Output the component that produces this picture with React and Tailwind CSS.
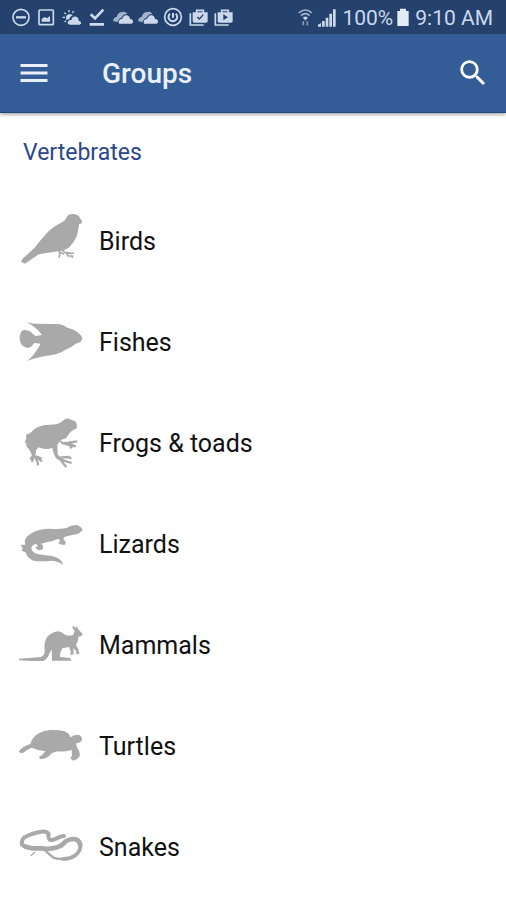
import React from "react";
import { MdMenu, MdSearch } from "react-icons/md";

const groups = [
  {
    name: "Birds",
    viewBox: "27 27 192 192",
    art: (
      <>
        <path d="M170 48 Q174 39 188 39 Q205 39 210 51 L217 63 Q216 68 207 70 Q205 88 201 104 Q193 124 176 140 Q160 151 144 151 L114 155 Q98 157 84 161 L45 188 L33 182 Q33 176 43 169 L75 139 Q91 118 110 97 Q130 76 156 64 Q167 59 170 48Z" />
        <path d="M145 148 L150 156 L147 170 M149 154 L162 159 M158 149 L166 155 L184 157 L192 156 M169 156 L174 165 L187 165 L187 171" fill="none" stroke="currentColor" strokeWidth="5" />
      </>
    ),
  },
  {
    name: "Fishes",
    viewBox: "27 15 192 192",
    art: (
      <path d="M33 41 Q48 49 70 53 L139 54 Q160 55 172 65 Q195 70 206 82 Q217 92 217 98 Q215 108 200 112 Q185 124 165 132 Q150 143 126 147 Q100 151 82 155 Q63 158 51 166 Q62 156 70 147 Q84 128 92 113 L73 111 Q67 122 56 126 Q47 126 40 121 Q29 112 29 97 Q29 80 38 73 Q51 70 63 78 Q69 86 77 90 L96 87 Q85 70 68 59 Q54 49 33 41Z" />
    ),
  },
  {
    name: "Frogs & toads",
    viewBox: "27 18 192 192",
    art: (
      <>
        <path d="M48 86 L60 82 Q76 63 100 58 L140 55 Q155 49 162 42 Q168 35 179 39 Q186 43 195 45 Q203 55 200 67 L184 76 Q174 85 169 96 L151 103 L160 108 L180 107 L186 116 L175 120 L155 114 L149 106 L142 116 L143 145 L153 157 L144 162 Q134 154 132 145 L127 126 Q105 133 85 124 L79 132 L75 151 L67 153 Q63 138 56 128 Q46 121 49 110 L43 109 Q51 99 48 86Z" />
        <path d="M176 110 L201 106 M178 113 L197 122 M178 114 L185 127 M148 155 L175 153 L184 157 M151 159 L168 166 L185 171 M149 158 L161 174 L169 183 M70 148 L61 160 M71 149 L66 168 M73 149 L83 169 L84 178 M75 150 L95 158 M78 152 L96 166" fill="none" stroke="currentColor" strokeWidth="7" />
      </>
    ),
  },
  {
    name: "Lizards",
    viewBox: "27 6 192 192",
    art: (
      <path d="M44 89 Q49 73 73 62 Q92 53 116 53 Q145 55 170 51 Q182 42 202 42 Q214 48 218 55 Q213 66 199 70 Q178 73 163 78 L160 85 L167 92 L166 101 L154 101 L144 96 L151 91 L145 83 Q128 91 110 94 L93 98 L100 105 L97 116 L84 117 L76 110 L84 105 L77 98 Q64 103 64 111 Q66 125 81 129 Q101 132 126 135 Q153 140 160 162 Q148 151 126 149 Q94 153 70 149 Q51 141 47 124 L35 119 L38 111 L31 101 L46 101Z" />
    ),
  },
  {
    name: "Mammals",
    viewBox: "27 3 192 192",
    art: (
      <path d="M27 137 L92 132 Q104 127 104 113 Q101 93 109 76 Q121 58 145 55 Q157 57 165 65 Q176 70 189 66 L194 54 L185 40 L194 41 L197 46 L199 38 L206 50 L218 63 L215 69 L205 71 Q205 84 198 97 L205 108 L208 123 L199 124 L198 113 L190 106 L191 124 L181 126 L182 115 L177 102 L157 106 Q149 119 150 132 L181 135 L184 143 L126 143 L125 109 L118 122 Q112 139 100 144 L65 144 L27 142Z" />
    ),
  },
  {
    name: "Turtles",
    viewBox: "27 -3 192 192",
    art: (
      <path d="M26 107 Q35 92 61 84 Q65 65 84 53 Q101 43 122 42 Q145 41 164 46 Q179 53 181 64 Q193 54 208 57 Q217 62 216 72 Q212 81 198 82 L200 92 Q211 106 209 120 Q201 132 190 134 L181 127 L186 119 L185 102 Q164 108 143 106 L126 111 Q111 130 90 129 L87 123 Q97 119 106 106 Q82 103 66 95 Q54 98 40 110 Q31 113 26 107Z" />
    ),
  },
  {
    name: "Snakes",
    viewBox: "27 0 192 192",
    art: (
      <g fill="none" stroke="currentColor" strokeLinecap="round" strokeLinejoin="round">
        <path d="M162 60 L150 62 Q131 73 120 72 Q113 66 116 54 Q110 44 94 47 Q62 52 42 65 Q31 77 38 88 Q50 98 79 98" strokeWidth="12" />
        <path d="M45 91 Q63 98 93 97 Q120 101 142 94 Q157 89 166 77 Q181 66 198 70 Q210 75 211 89" strokeWidth="14" />
        <path d="M211 86 Q213 104 197 117 Q182 129 157 129" strokeWidth="11" />
        <path d="M177 127 Q147 132 130 125 L108 106" strokeWidth="7" />
        <path d="M63 119 L74 109" strokeWidth="4" />
      </g>
    ),
  },
];

const cloud = (
  <>
    <path d="M1 43 Q0 31 11 30 Q15 15 28 15 Q38 13 43 21 Q30 21 26 32 Q16 34 14 45Z" opacity="0.75" />
    <path d="M18 50 Q14 37 28 35 Q32 22 43 25 Q51 28 51 36 Q60 37 60 44 Q60 50 54 50Z" />
  </>
);

const bag = (
  <>
    <path d="M4 19 V54 H44" fill="none" stroke="currentColor" strokeWidth="5" />
    <path d="M23 18 V10 H43 V18" fill="none" stroke="currentColor" strokeWidth="5" />
    <path d="M11 16 H56 V42 Q56 47 51 47 H16 Q11 47 11 42Z" />
  </>
);

const notifications = [
  {
    id: "do-not-disturb",
    art: (
      <g fill="none" stroke="currentColor" strokeWidth="5">
        <circle cx="30" cy="31" r="24" />
        <path d="M15 31 H45" strokeWidth="7" />
      </g>
    ),
  },
  {
    id: "screenshot",
    art: (
      <>
        <rect x="9" y="9" width="43" height="44" rx="3" fill="none" stroke="currentColor" strokeWidth="5" />
        <path d="M17 44 V36 L26 30 L33 34 L42 27 V44Z" />
      </>
    ),
  },
  {
    id: "weather",
    art: (
      <>
        <path d="M21 9 V16 M7 17 L12 21 M2 31 H9 M8 45 L12 41 M35 12 L31 18" stroke="currentColor" strokeWidth="4" />
        <path d="M13 39 Q9 25 20 22 Q28 20 32 25 Q24 29 22 36Z" />
        <path d="M23 53 Q13 50 19 42 Q22 38 28 39 Q31 27 42 29 Q50 31 50 41 Q59 43 57 50 L53 53Z" />
      </>
    ),
  },
  {
    id: "download-done",
    art: <path d="M11 22 L24 34 L49 8 M8 52 H51" fill="none" stroke="currentColor" strokeWidth="8" />,
  },
  { id: "cloud-sync", art: cloud },
  { id: "cloud-backup", art: cloud },
  {
    id: "power",
    art: (
      <g fill="none" stroke="currentColor" strokeWidth="5">
        <circle cx="30" cy="30" r="25" />
        <path d="M21 20 A13 13 0 1 0 38 20 M30 18 V32" strokeWidth="6" />
      </g>
    ),
  },
  {
    id: "apps-updated",
    art: (
      <>
        {bag}
        <path d="M25 30 L31 36 L43 23" fill="none" className="stroke-[#24426d]" strokeWidth="4" />
      </>
    ),
  },
  {
    id: "play-store",
    art: (
      <>
        {bag}
        <path d="M28 22 L42 31 L28 40Z" className="fill-[#24426d]" />
      </>
    ),
  },
];

function StatusBar() {
  return (
    <div className="flex h-[34px] items-center justify-between bg-[#24426d] pr-[13px] pl-[11px] text-[#ccd9ec]">
      <div className="flex w-[223px] justify-between">
        {notifications.map((item) => (
          <svg key={item.id} viewBox="0 0 60 60" fill="currentColor" className="size-5" aria-hidden="true">
            {item.art}
          </svg>
        ))}
      </div>

      <div className="flex items-center text-[21px] leading-8 whitespace-nowrap">
        <svg viewBox="0 0 45 60" fill="none" stroke="currentColor" className="h-5 w-[15px]" aria-hidden="true">
          <path d="M2 18 Q22 0 42 18 M9 26 Q22 14 35 26" strokeWidth="5" opacity="0.75" />
          <path d="M15 32 Q22 26 29 32 L22 40Z" fill="currentColor" />
          <path d="M16 43 V55 M28 43 V55" strokeWidth="5" opacity="0.6" />
        </svg>
        <svg viewBox="0 0 54 60" fill="currentColor" className="ml-[5px] h-5 w-[18px]" aria-hidden="true">
          <path d="M0 59 V53 L9 48 V59Z M12 59 V42 H20 V59Z M23 59 V32 H31 V59Z M34 59 V20 H42 V59Z M45 59 V7 H53 V59Z" />
        </svg>
        <span className="ml-[6px] pt-0.5">100%</span>
        <svg viewBox="0 0 36 60" fill="currentColor" className="ml-1 h-5 w-3 text-[#e4ebf5]" aria-hidden="true">
          <path d="M9 5 H27 V12 H35 V57 H1 V12 H9Z" />
        </svg>
        <span className="ml-[6px] pt-0.5">9:10 AM</span>
      </div>
    </div>
  );
}

function AppBar() {
  return (
    <header className="relative flex h-[79px] items-center border-b border-[#1d4680] bg-[#345d98] px-4 text-[#e9f0fa] shadow-[0_2px_3px_rgba(0,0,0,0.3)]">
      <button type="button" aria-label="Open menu">
        <MdMenu size={36} />
      </button>
      <h1 className="ml-[50px] flex-1 pt-0.5 text-[28px] leading-8 font-medium">Groups</h1>
      <button type="button" aria-label="Search" className="text-white">
        <MdSearch size={34} />
      </button>
    </header>
  );
}

export default function App() {
  return (
    <div className="min-h-screen bg-white font-[Roboto,sans-serif]">
      <StatusBar />
      <AppBar />
      <main>
        <h2 className="flex h-[78px] items-center px-[23px] pt-0.5 text-[23px] text-[#29478a]">Vertebrates</h2>
        <ul>
          {groups.map((group) => (
            <li key={group.name}>
              <a href="#" className="flex h-[101px] items-center gap-4 px-[19px] text-[25px] text-[#111]">
                <svg viewBox={group.viewBox} fill="currentColor" className="size-16 shrink-0 text-[#a9a9a9]" aria-hidden="true">
                  {group.art}
                </svg>
                {group.name}
              </a>
            </li>
          ))}
        </ul>
      </main>
    </div>
  );
}
